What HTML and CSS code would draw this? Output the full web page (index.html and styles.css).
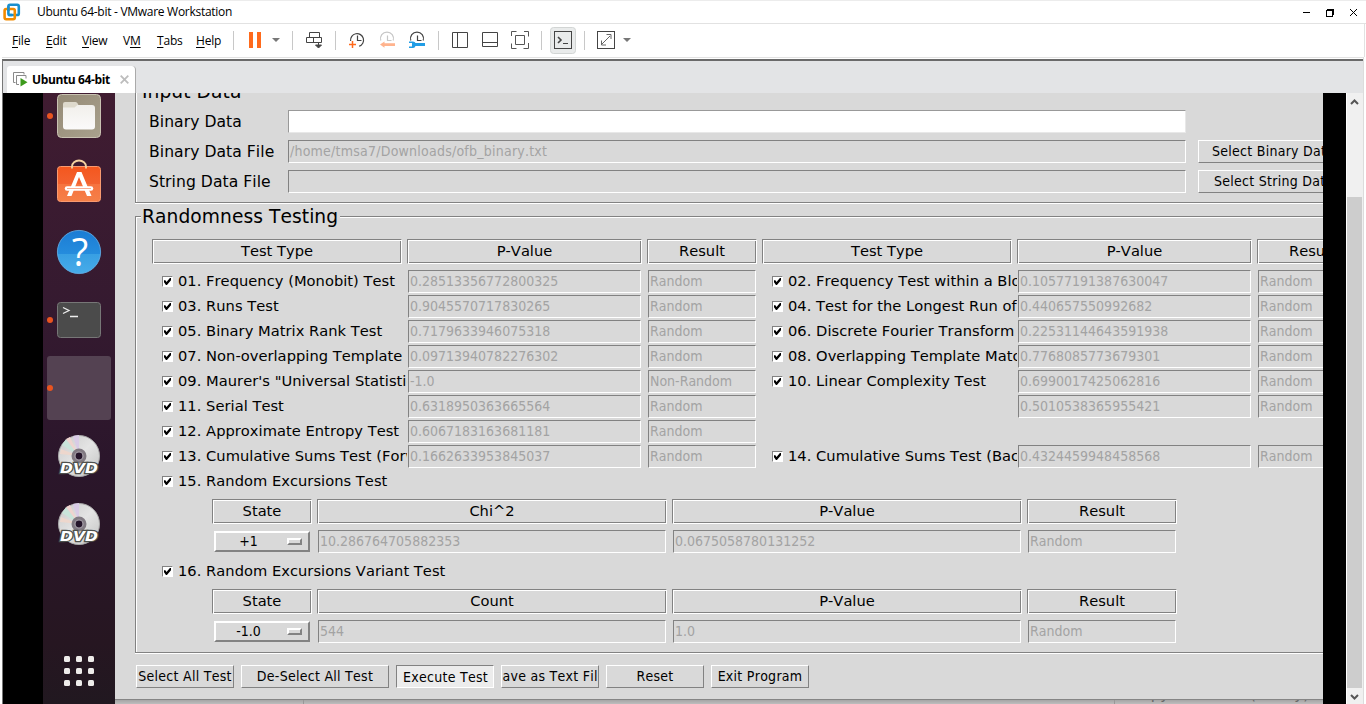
FILE: index.html
```html
<!DOCTYPE html>
<html lang="en">
<head>
<meta charset="utf-8">
<title>Ubuntu 64-bit - VMware Workstation</title>
<link rel="stylesheet" href="styles.css">
</head>
<body>
<div class="window">
  <header class="titlebar">
    <svg class="logo" width="18" height="18" viewBox="0 0 18 18" fill="none" stroke-width="2.6">
      <rect x="5.4" y="1.8" width="10.4" height="10.2" rx="1.6" stroke="#1a8fce"/>
      <rect x="1.6" y="6" width="10.2" height="10.2" rx="1.6" stroke="#f38b00"/>
      <path d="M5.4 8V3.4M5.6 12H9" stroke="#1a8fce"/>
    </svg>
    <span class="title">Ubuntu 64-bit - VMware Workstation</span>
    <svg class="controls" width="62" height="23" viewBox="0 0 62 23" fill="none" stroke="#000" shape-rendering="crispEdges">
      <path d="M1 11.500h7"/>
      <path d="M24.500 9.500h6v6h-6zM25 8.500h7M31.500 8v6" stroke-width="1.400"/>
      <path d="M48 8l7 7M55 8l-7 7" shape-rendering="auto"/>
    </svg>
  </header>
  <nav class="menubar">
    <span class="menu m1"><u>F</u>ile</span><span class="menu m2"><u>E</u>dit</span><span class="menu m3"><u>V</u>iew</span><span class="menu m4">V<u>M</u></span><span class="menu m5"><u>T</u>abs</span><span class="menu m6"><u>H</u>elp</span>
    <svg class="tools" width="410" height="33" viewBox="230 24 410 33" fill="none" stroke="#444">
      <path d="M233.500 31v19M292.500 31v19M335.500 31v19M438.500 31v19M541.500 31v19M584.500 31v19" stroke="#c8c8c8"/>
      <path d="M249 32h4v16h-4zM257 32h4v16h-4z" fill="#ff6a1c" stroke="none"/>
      <path d="M272 38h8l-4 4zM623 38h8l-4 4z" fill="#777" stroke="none"/>
      <path d="M309.500 37.500v-5h10v5M306.500 37.500h15v5h-15zM313.500 37.500v5" />
      <path d="M318.500 42v4M315.500 45h6l-3 3z" fill="#444" stroke-width="1"/>
      <g stroke-width="1.200">
        <path d="M350.600 41a6.500 6.500 0 1 1 8.500 5.300M357.500 35.500v5h4"/>
        <path d="M349 44.500h7M352.500 41v7" stroke="#ff6a1c" stroke-width="1.500"/>
        <path d="M380.800 40.500a6.500 6.500 0 1 1 12.400 0M387.500 35.500v5h4" stroke="#c6c6c6"/>
        <path d="M380 44.500l4.500-3v1.800H395v2.600h-10.500v1.800z" fill="#ffb38d" stroke="none"/>
        <path d="M410.800 40.500a6.500 6.500 0 1 1 12.400 0M417.500 35.500v5h4"/>
        <path d="M409 41.500h4q2 0 2.500 1.500H425v3h-9.500q-.5 2-2.500 2h-4v-1.500h3v-3.500h-3z" fill="#219de5" stroke="none"/>
      </g>
      <path d="M452.500 32.500h15v15h-15zM457.500 32.500v15M482.500 32.500h15v14h-15zM482.500 42.500h15"/>
      <path d="M515.500 35.500h9v9h-9zM511.500 36v-4.500h5M524 31.500h4.500v5M528.500 43v5.500h-5M516.500 48.500h-5v-5" stroke="#555"/>
      <rect x="550.500" y="27.500" width="25" height="26" rx="3" fill="#e9ebeb" stroke="#d2d5d4"/>
      <rect x="554.500" y="31.500" width="17" height="17"/>
      <path d="M558 37l3 3-3 3" stroke-width="1.600"/><path d="M563 43.500h5"/>
      <rect x="597.500" y="31.500" width="17" height="17"/>
      <path d="M602 44l8-8M601.500 40.500v4.500h4.500M606.500 34.500h4.500v4.500" stroke="#666"/>
    </svg>
  </nav>
  <main class="content">
    <div class="tabs">
      <div class="tab">
        <svg width="16" height="15" viewBox="0 0 16 15" fill="none" stroke="#8a8a8a">
          <path d="M2.500 10.500h-2V.5h10.500v2M6 12.500H3.500v-9h9.500v3"/>
          <path d="M7.500 6l7 4.300-7 4.300z" fill="#3c9a1c" stroke="none"/>
        </svg>
        <span class="tab-name">Ubuntu 64-bit</span>
        <svg width="9" height="9" viewBox="0 0 9 9" stroke="#bdbdbd" stroke-width="1.800"><path d="M.7.7l7.600 7.600M8.300.7L.7 8.300"/></svg>
      </div>
    </div>
    <div class="guest">
      <div class="pillar left"></div>
      <aside class="dock">
        <svg width="72" height="68" viewBox="0 0 72 68">
          <defs>
            <linearGradient id="files" x1="0" y1="0" x2="1" y2="1"><stop offset="0" stop-color="#958a76"/><stop offset="1" stop-color="#a9a18d"/></linearGradient>
            <linearGradient id="paper" x1="0" y1="0" x2="0" y2="1"><stop offset="0" stop-color="#f1efeb"/><stop offset="1" stop-color="#fbfafa"/></linearGradient>
          </defs>
          <rect x="14.500" y="12.500" width="43" height="43" rx="4" fill="url(#files)" stroke="#c9c2b2"/>
          <path d="M20 22q0-2 2-2h10.500q1.500 0 2.500 2l1 3v3H20z" fill="#ded9cc"/>
          <path d="M20 25.500h11.500l3-2.500H49q3 0 3 3v18.500q0 3-3 3H23q-3 0-3-3z" fill="url(#paper)"/>
          <circle cx="7" cy="34" r="3" fill="#e95420"/>
        </svg>
        <svg width="72" height="68" viewBox="0 0 72 68">
          <defs><linearGradient id="bag" x1="0" y1="0" x2="0" y2="1"><stop offset="0" stop-color="#f4571e"/><stop offset=".5" stop-color="#f36230"/><stop offset=".51" stop-color="#f6733f"/><stop offset="1" stop-color="#f58048"/></linearGradient></defs>
          <rect x="14.500" y="16.500" width="43" height="35" rx="3" fill="url(#bag)" stroke="#f99a70"/>
          <path d="M29 18.500v-2a7 6 0 0 1 14 0v2" fill="none" stroke="#f6d3a0" stroke-width="1.800"/>
          <path d="M34 22h4.500L48.500 46H44L36 27 28.500 46H24z" fill="#fff"/>
          <path d="M24 38.500h24" stroke="#fff" stroke-width="4.500" stroke-linecap="round"/>
          <path d="M24 38.500h24" stroke="#f9ac92" stroke-width="1"/>
        </svg>
        <svg width="72" height="68" viewBox="0 0 72 68">
          <defs><linearGradient id="help" x1="0" y1="0" x2="0" y2="1"><stop offset="0" stop-color="#1b7cd4"/><stop offset=".54" stop-color="#258cdd"/><stop offset=".55" stop-color="#389fe3"/><stop offset="1" stop-color="#47ace9"/></linearGradient></defs>
          <circle cx="36" cy="34" r="21.600" fill="url(#help)" stroke="#65b2ec" stroke-width=".8"/>
          <text class="help-mark" x="37" y="48" text-anchor="middle">?</text>
        </svg>
        <svg width="72" height="68" viewBox="0 0 72 68">
          <rect x="14.500" y="16.500" width="43" height="35" rx="3" fill="#4b4b4b" stroke="#777"/>
          <path d="M20 21.500l6 3-6 3M27 30.500h8" fill="none" stroke="#eee" stroke-width="1.300"/>
          <circle cx="7" cy="34" r="3" fill="#e95420"/>
        </svg>
        <svg width="72" height="68" viewBox="0 0 72 68">
          <rect x="4" y="2" width="64" height="64" rx="3" fill="#544252"/>
          <circle cx="7" cy="34" r="3" fill="#e95420"/>
        </svg>
        <svg width="72" height="68" viewBox="0 0 72 68">
          <defs>
            <linearGradient id="disc" x1="0" y1="0" x2="1" y2="1"><stop offset="0" stop-color="#c9c9c9"/><stop offset=".5" stop-color="#e4e4e4"/><stop offset="1" stop-color="#c2c2c2"/></linearGradient>
            <g id="dvd">
              <circle cx="36" cy="34" r="20.500" fill="url(#disc)" stroke="#aaa"/>
              <path d="M36 34L19 23l4-6z" fill="#c9e4da"/><path d="M36 34L23 17l4-2z" fill="#efd4cf"/><path d="M36 34L30 14l6-1z" fill="#d9cbe6"/>
              <path d="M36 34L17 32l1-5z" fill="#edd7cd"/>
              <circle cx="36" cy="34" r="7.500" fill="#817a82"/><circle cx="36" cy="34" r="4" fill="#25152a" stroke="#aaa3ac" stroke-width="1.200"/>
              <text class="dvd-mark" x="36" y="51" text-anchor="middle" textLength="38" lengthAdjust="spacingAndGlyphs">DVD</text>
            </g>
          </defs>
          <use href="#dvd"/>
        </svg>
        <svg width="72" height="68" viewBox="0 0 72 68"><use href="#dvd"/></svg>
        <svg class="apps" width="30" height="30" viewBox="0 0 30 30" fill="#eeecea">
          <rect width="6" height="6" rx="1.500"/><rect x="12" width="6" height="6" rx="1.500"/><rect x="24" width="6" height="6" rx="1.500"/>
          <rect y="12" width="6" height="6" rx="1.500"/><rect x="12" y="12" width="6" height="6" rx="1.500"/><rect x="24" y="12" width="6" height="6" rx="1.500"/>
          <rect y="24" width="6" height="6" rx="1.500"/><rect x="12" y="24" width="6" height="6" rx="1.500"/><rect x="24" y="24" width="6" height="6" rx="1.500"/>
        </svg>
      </aside>
      <div class="desktop">
        <div class="app">
          <section class="group input">
            <h2 class="legend">Input Data</h2>
            <div class="field"><label>Binary Data</label><div class="entry white"></div></div>
            <div class="field"><label>Binary Data File</label><div class="entry">/home/tmsa7/Downloads/ofb_binary.txt</div><button class="btn pick">Select Binary Data File</button></div>
            <div class="field"><label>String Data File</label><div class="entry"></div><button class="btn pick second">Select String Data File</button></div>
          </section>
          <section class="group testing">
            <h2 class="legend">Randomness Testing</h2>
            <div class="head tests">
              <div class="th">Test Type</div><div class="th">P-Value</div><div class="th">Result</div><div class="th">Test Type</div><div class="th">P-Value</div><div class="th">Result</div>
            </div>
            <div class="rows">
              <div class="check"><i class="box"></i><span>01. Frequency (Monobit) Test</span></div><div class="entry">0.28513356772800325</div><div class="entry">Random</div>
              <div class="check"><i class="box"></i><span>02. Frequency Test within a Block</span></div><div class="entry">0.10577191387630047</div><div class="entry">Random</div>
              <div class="check"><i class="box"></i><span>03. Runs Test</span></div><div class="entry">0.9045570717830265</div><div class="entry">Random</div>
              <div class="check"><i class="box"></i><span>04. Test for the Longest Run of Ones in a Block</span></div><div class="entry">0.440657550992682</div><div class="entry">Random</div>
              <div class="check"><i class="box"></i><span>05. Binary Matrix Rank Test</span></div><div class="entry">0.7179633946075318</div><div class="entry">Random</div>
              <div class="check"><i class="box"></i><span>06. Discrete Fourier Transform (Spectral) Test</span></div><div class="entry">0.22531144643591938</div><div class="entry">Random</div>
              <div class="check"><i class="box"></i><span>07. Non-overlapping Template Matching Test</span></div><div class="entry">0.09713940782276302</div><div class="entry">Random</div>
              <div class="check"><i class="box"></i><span>08. Overlapping Template Matching Test</span></div><div class="entry">0.7768085773679301</div><div class="entry">Random</div>
              <div class="check"><i class="box"></i><span>09. Maurer's "Universal Statistical" Test</span></div><div class="entry">-1.0</div><div class="entry">Non-Random</div>
              <div class="check"><i class="box"></i><span>10. Linear Complexity Test</span></div><div class="entry">0.6990017425062816</div><div class="entry">Random</div>
              <div class="check"><i class="box"></i><span>11. Serial Test</span></div><div class="entry">0.6318950363665564</div><div class="entry">Random</div>
              <div class="check"></div><div class="entry">0.5010538365955421</div><div class="entry">Random</div>
              <div class="check"><i class="box"></i><span>12. Approximate Entropy Test</span></div><div class="entry">0.6067183163681181</div><div class="entry">Random</div>
              <div class="blank"></div>
              <div class="check"><i class="box"></i><span>13. Cumulative Sums Test (Forward)</span></div><div class="entry">0.1662633953845037</div><div class="entry">Random</div>
              <div class="check"><i class="box"></i><span>14. Cumulative Sums Test (Backward)</span></div><div class="entry">0.4324459948458568</div><div class="entry">Random</div>
            </div>
            <div class="check wide"><i class="box"></i><span>15. Random Excursions Test</span></div>
            <div class="head excursion"><div class="th">State</div><div class="th">Chi^2</div><div class="th">P-Value</div><div class="th">Result</div></div>
            <div class="values excursion"><button class="option"><span>+1</span><i></i></button><div class="entry">10.286764705882353</div><div class="entry">0.0675058780131252</div><div class="entry">Random</div></div>
            <div class="check wide"><i class="box"></i><span>16. Random Excursions Variant Test</span></div>
            <div class="head excursion"><div class="th">State</div><div class="th">Count</div><div class="th">P-Value</div><div class="th">Result</div></div>
            <div class="values excursion"><button class="option"><span>-1.0</span><i></i></button><div class="entry">544</div><div class="entry">1.0</div><div class="entry">Random</div></div>
          </section>
          <footer class="actions">
            <button class="btn">Select All Test</button><button class="btn long">De-Select All Test</button><button class="btn pressed">Execute Test</button><button class="btn">Save as Text File</button><button class="btn">Reset</button><button class="btn">Exit Program</button>
          </footer>
        </div>
        <div class="behind"><div class="pane a"></div><div class="pane b"></div><div class="pane c"><span>Copy selected (binary)</span></div></div>
      </div>
      <div class="pillar right"></div>
      <div class="scroll">
        <svg width="15" height="17" viewBox="0 0 15 17"><path d="M4 11l3.500-3.500L11 11" fill="none" stroke="#555" stroke-width="2"/></svg>
        <div class="thumb"></div>
        <svg width="15" height="16" viewBox="0 0 15 16"><path d="M4 7l3.500 3.500L11 7" fill="none" stroke="#555" stroke-width="2"/></svg>
      </div>
    </div>
  </main>
</div>
</body>
</html>
```
FILE: styles.css
```css
* { box-sizing: border-box; }
body { margin: 0; background: #fff; overflow: hidden; color: #000; }
button { font: inherit; color: inherit; background: none; border: 0; padding: 0; margin: 0; border-radius: 0; }
svg { display: block; flex: none; }
.window { width: 1366px; height: 704px; display: flex; flex-direction: column; border-top: 1px solid #ececec; font: 12px/16px "Open Sans", "Noto Sans", sans-serif; overflow: hidden; }
.titlebar { height: 23px; display: flex; align-items: center; padding-left: 3px; border-bottom: 1px solid #e2e2e2; flex: none; }
.title { margin-left: 16px; letter-spacing: -0.28px; white-space: nowrap; }
.controls { margin: 0 2px 0 auto; }
.menubar { height: 33px; width: 1365px; display: flex; align-items: center; padding-left: 12px; flex: none; border-right: 1px solid #e2e2e2; }
.menu { white-space: nowrap; letter-spacing: -0.2px; }
.menu u { text-underline-offset: 2px; }
.m1 { width: 34px; } .m2 { width: 36px; } .m3 { width: 41px; } .m4 { width: 34px; } .m5 { width: 39px; } .m6 { width: 34px; }
.content { margin-left: 2px; width: 1362px; height: 647px; border-top: 1px solid #e2e2e2; border-right: 1px solid #dcdcdc; flex: none; display: flex; flex-direction: column; }
.tabs { height: 34px; background: #e3e4e6; border-top: 2px solid #6a6a6a; border-left: 1px solid #777; margin-top: 1px; padding: 5px 0 0 4px; flex: none; }
.tab { width: 129px; height: 27px; background: #fff; border-radius: 3px 4px 0 0; border-right: 1px solid #aaa; display: flex; align-items: center; padding-left: 6px; }
.tab-name { font: bold 12px/16px "Open Sans", sans-serif; width: 79px; margin: 0 9px 0 3px; letter-spacing: -0.38px; white-space: nowrap; }
.guest { flex: 1; display: flex; min-height: 0; border-left: 1px solid #777; overflow: hidden; }
.pillar { background: #000; flex: none; }
.left { width: 40px; }
.right { width: 23px; }
.dock { width: 72px; flex: none; background: linear-gradient(#401c31, #351a30 35%, #2b162b 60%, #261621 90%, #211820); overflow: hidden; }
.dock svg:first-child { margin-top: -11px; }
.dock .apps { margin: 98px 0 0 21px; }
.help-mark { font: 38px "Open Sans", sans-serif; fill: #fff; }
.dvd-mark { font: italic bold 13.5px "DejaVu Sans", sans-serif; fill: #fff; stroke: #4d504c; stroke-width: 2.4px; paint-order: stroke; }
.desktop { width: 1208px; height: 611px; flex: none; overflow: hidden; background: #b9b9b9; }
.app { display: flow-root; width: 1300px; height: 607px; background: #d9d9d9; border-bottom: 1px solid #858585; padding-left: 20px; font-family: "DejaVu Sans", sans-serif; }
.group { position: relative; width: 1280px; border: 1px solid #828282; box-shadow: inset 1px 1px #fff, 0 1px #fff; }
.input { margin-top: -2px; height: 112px; padding: 18px 0 0 13px; }
.testing { margin-top: 13px; height: 437px; padding: 22px 0 0 16px; }
.legend { position: absolute; left: 5px; top: -13px; margin: 0; padding: 0 2px 0 1px; background: #d9d9d9; font: 18.67px/25px "DejaVu Sans", sans-serif; letter-spacing: 0.06px; white-space: nowrap; }
.field { display: flex; height: 23px; margin-bottom: 7px; }
.field label { width: 139px; font-size: 15.6px; line-height: 24px; letter-spacing: 0.05px; white-space: nowrap; }
.field .entry { width: 898px; margin: 0; letter-spacing: 0.23px; }
.entry { height: 23px; margin: 1px; border: 1px solid; border-color: #828282 #fff #fff #828282; padding-left: 1px; font: 14px/21px "DejaVu Sans Condensed", "DejaVu Sans", sans-serif; font-stretch: condensed; color: #a3a3a3; white-space: nowrap; overflow: hidden; }
.entry.white { background: #fff; border-color: #999 #e8e8e8 #e8e8e8 #999; }
.btn { width: 98px; height: 23px; flex: none; border: 1px solid; border-color: #fff #828282 #828282 #fff; font: 14px/21px "DejaVu Sans Condensed", "DejaVu Sans", sans-serif; font-stretch: condensed; letter-spacing: 0.27px; white-space: nowrap; overflow: hidden; display: flex; justify-content: center; }
.pick { width: 180px; margin-left: 12px; justify-content: flex-start; padding-left: 13px; }
.second { padding-left: 15px; }
.head { display: grid; column-gap: 5px; height: 25px; }
.tests { grid-template-columns: 250px 235px 110px 250px 235px 110px; margin-bottom: 5px; }
.th { height: 25px; border: 1px solid; border-color: #828282 #fff #fff #828282; box-shadow: inset 1px 1px #fff, inset -1px -1px #828282; font-size: 14.67px; line-height: 22px; text-align: center; }
.rows { display: grid; grid-template-columns: 255px 240px 115px 255px 240px 115px; grid-auto-rows: 25px; }
.rows .entry { margin-right: 6px; }
.blank { grid-column: span 3; }
.check { display: flex; height: 25px; padding-left: 10px; font-size: 14.67px; line-height: 24px; letter-spacing: 0.03px; white-space: nowrap; overflow: hidden; }
.check span { margin-left: 5px; }
.box { width: 11px; height: 11px; margin-top: 7px; flex: none; background: #fff; border: 1px solid; border-color: #828282 #fff #fff #828282; display: flex; }
.box::after { content: ""; width: 7px; height: 7px; background: #000; clip-path: polygon(0 32%, 20% 32%, 36% 58%, 84% 0, 100% 0, 100% 32%, 42% 100%, 28% 100%, 0 62%); margin: 1px 0 0 1px; }
.excursion { margin-left: 60px; display: grid; grid-template-columns: 100px 350px 350px 150px; column-gap: 5px; }
.head.excursion { margin-top: 5px; }
.values { height: 25px; margin-top: 5px; margin-bottom: 5px; }
.option { margin: 2px; height: 21px; width: 96px; border: 2px solid; border-color: #fff #828282 #828282 #fff; display: flex; align-items: center; font: 14px/17px "DejaVu Sans Condensed", "DejaVu Sans", sans-serif; font-stretch: condensed; }
.option span { width: 65px; text-align: center; }
.option i { width: 15px; height: 7px; margin-left: 6px; border: 2px solid; border-color: #fff #828282 #828282 #fff; }
.actions { display: flex; gap: 7px; padding: 12px 0 0 1px; }
.long { width: 148px; }
.pressed { background: #ececec; border-color: #828282 #fff #fff #828282; padding: 1px 0 0 1px; }
.app, .app * { font-kerning: none; }
.behind { height: 4px; display: flex; background: linear-gradient(#a5a5a5, #bdbdbd); overflow: hidden; }
.pane { height: 4px; border-right: 1px solid #989898; flex: none; }
.a { width: 189px; } .b { width: 811px; } .c { width: 208px; padding-left: 16px; font: 15px/20px "DejaVu Sans", sans-serif; color: #666; border: 0; white-space: nowrap; overflow: hidden; }
.c span { display: block; margin-top: -16px; word-spacing: 4px; }
.scroll { width: 17px; display: flex; flex-direction: column; background: #f0f0f0; border-left: 1px solid #fff; flex: none; padding-right: 1px; }
.thumb { height: 491px; margin-top: 87px; background: #cdcdcd; }
```
